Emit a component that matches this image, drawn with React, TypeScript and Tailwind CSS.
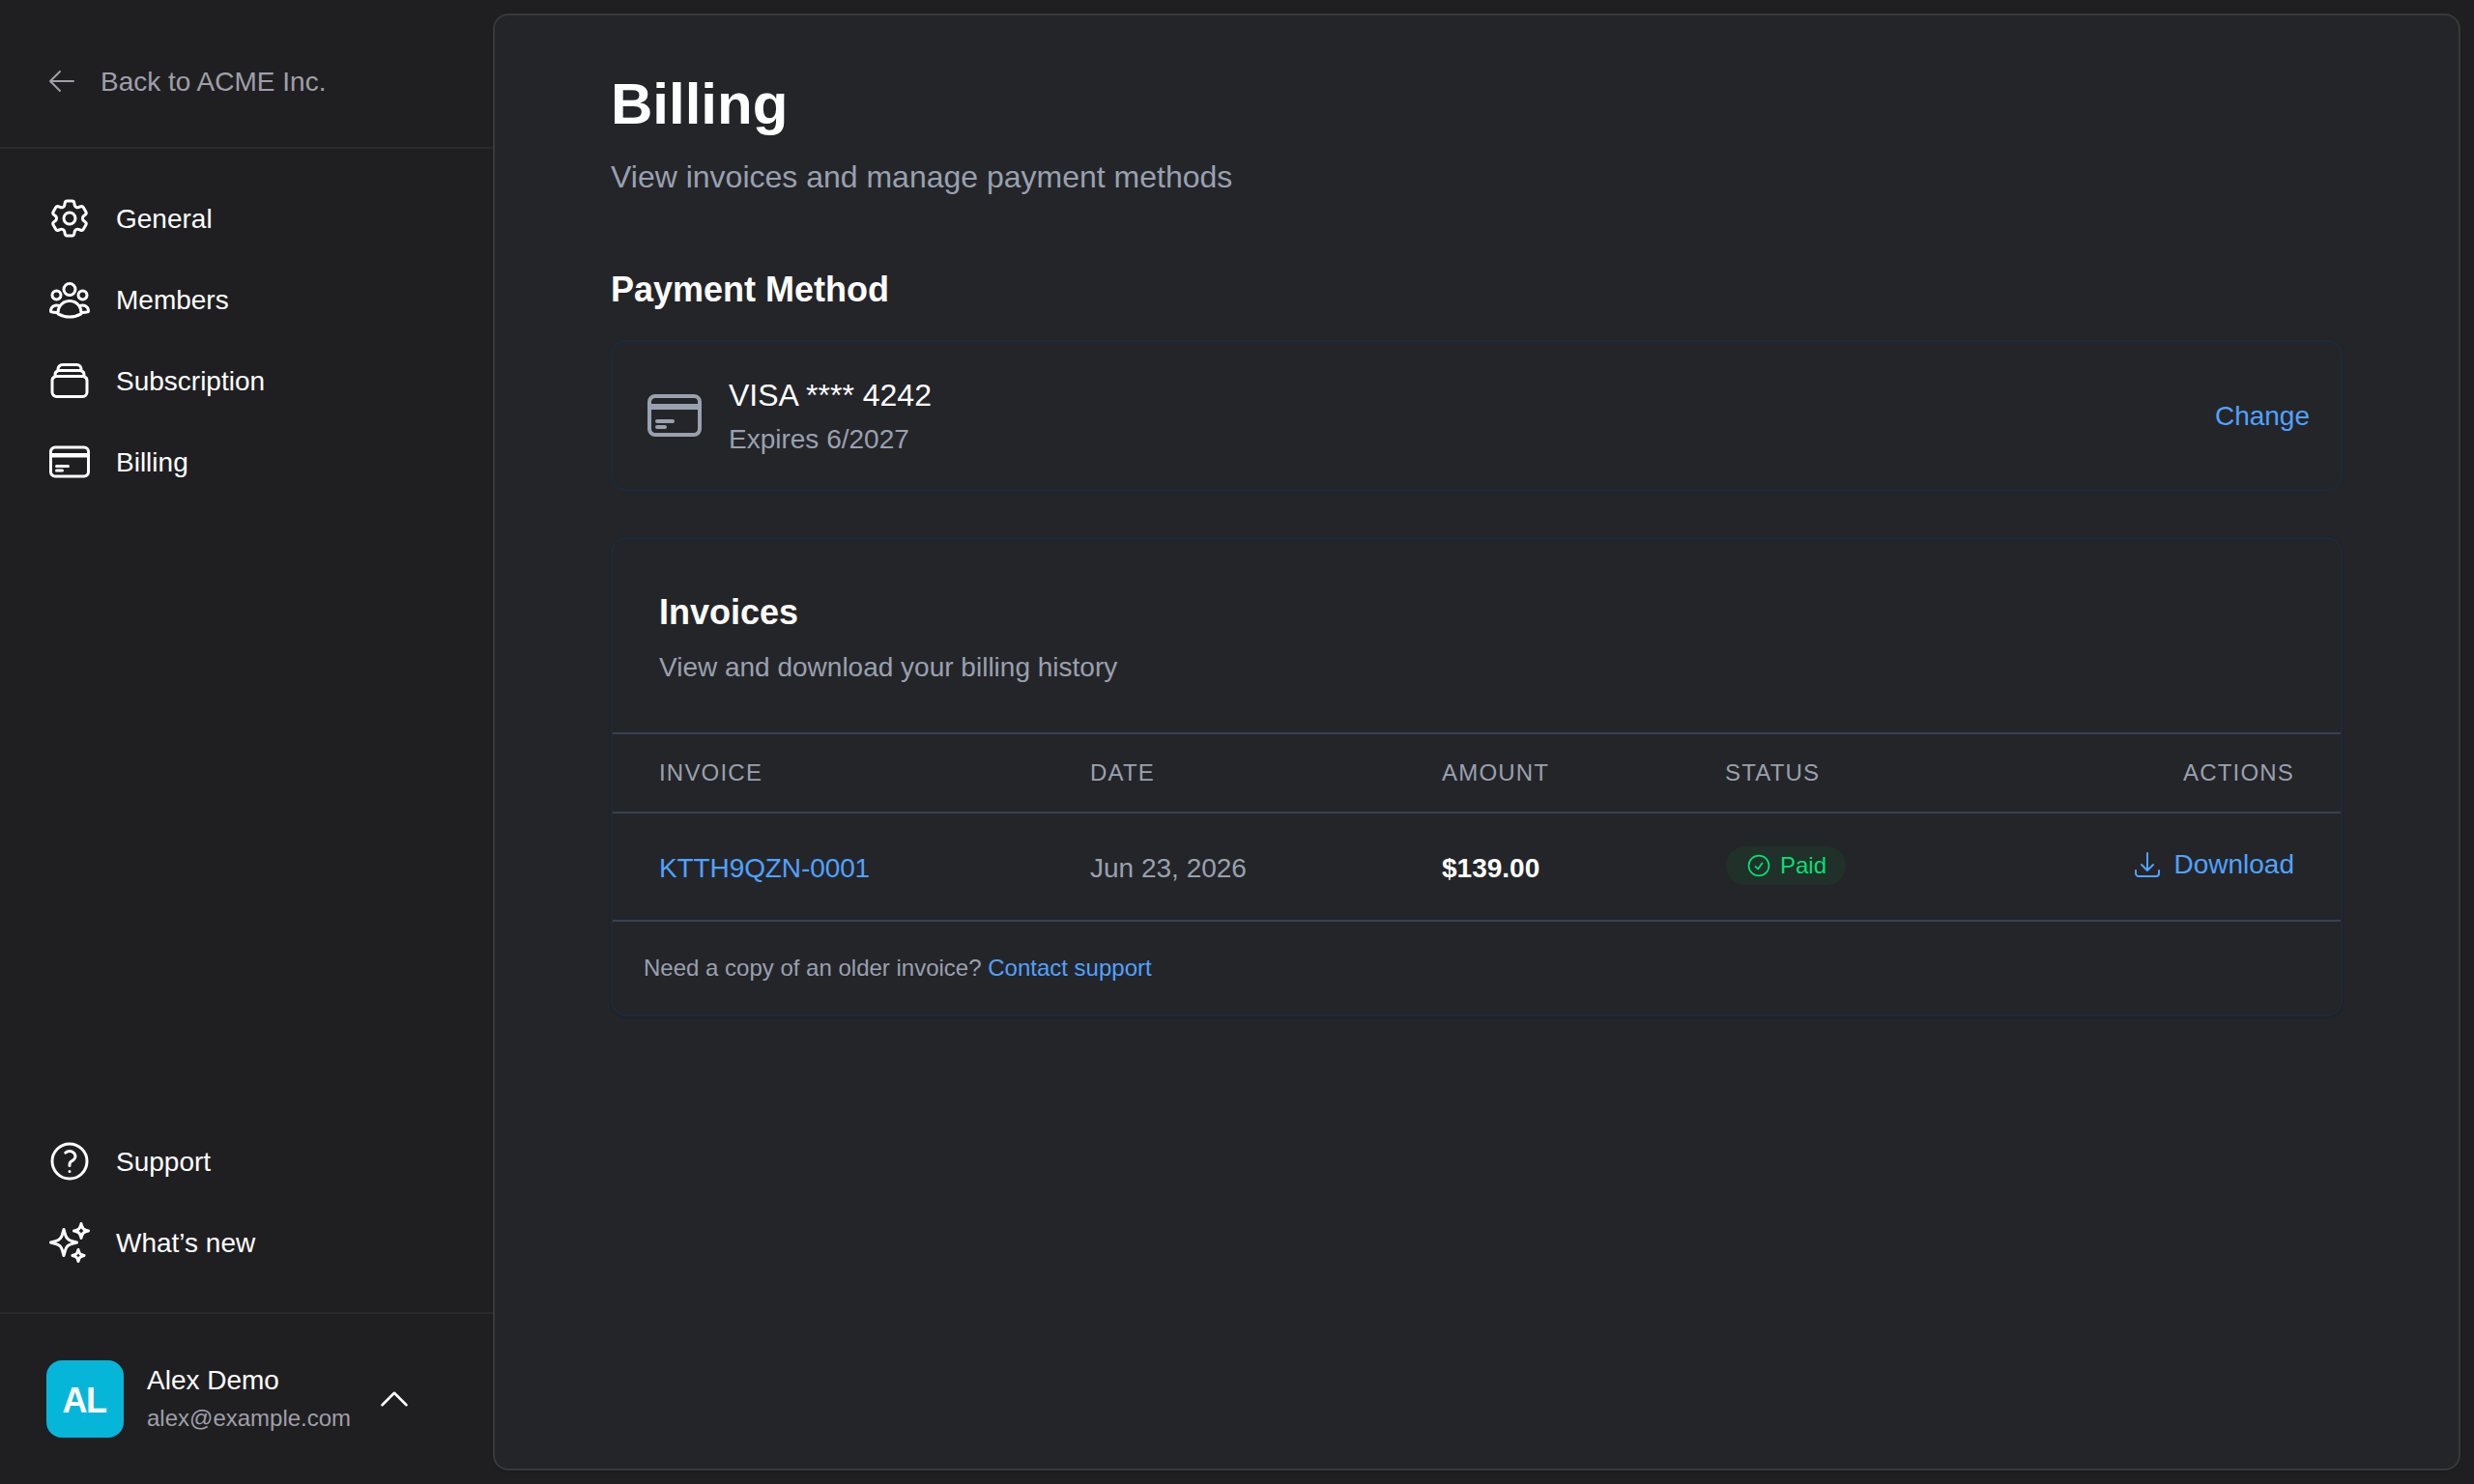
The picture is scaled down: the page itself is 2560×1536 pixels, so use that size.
import clsx from "clsx";
import type { ComponentType } from "react";
import {
  HiOutlineArrowDownTray,
  HiOutlineArrowLeft,
  HiOutlineCheckCircle,
  HiOutlineChevronUp,
  HiOutlineCog6Tooth,
  HiOutlineCreditCard,
  HiOutlineQuestionMarkCircle,
  HiOutlineRectangleStack,
  HiOutlineSparkles,
  HiOutlineUserGroup,
} from "react-icons/hi2";

type NavEntry = {
  label: string;
  icon: ComponentType<{ className?: string }>;
};

const mainNav: NavEntry[] = [
  { label: "General", icon: HiOutlineCog6Tooth },
  { label: "Members", icon: HiOutlineUserGroup },
  { label: "Subscription", icon: HiOutlineRectangleStack },
  { label: "Billing", icon: HiOutlineCreditCard },
];

const footerNav: NavEntry[] = [
  { label: "Support", icon: HiOutlineQuestionMarkCircle },
  { label: "What’s new", icon: HiOutlineSparkles },
];

const invoices = [
  { id: "KTTH9QZN-0001", date: "Jun 23, 2026", amount: "$139.00", status: "Paid" },
];

const NavList = ({ items }: { items: NavEntry[] }) => (
  <nav className="flex flex-col gap-1">
    {items.map(({ label, icon: Icon }) => (
      <a key={label} className="flex h-20 items-center gap-6 px-4 text-[28px] leading-10 text-white">
        <Icon className="size-12" />
        <span className="pt-0.5">{label}</span>
      </a>
    ))}
  </nav>
);

const Sidebar = () => (
  <aside className="flex w-[510px] shrink-0 flex-col">
    <div className="flex h-[154px] items-center border-b-2 border-[#2a2a2c] px-12">
      <a className="mt-4 flex items-center gap-6 text-[28px] leading-10 text-[#9f9fa9]">
        <HiOutlineArrowLeft className="size-8" />
        <span className="pt-0.5">Back to ACME Inc.</span>
      </a>
    </div>
    <div className="flex flex-1 flex-col justify-between px-8 py-8">
      <NavList items={mainNav} />
      <NavList items={footerNav} />
    </div>
    <div className="flex h-[178px] items-center border-t-2 border-[#2a2a2c] px-12">
      <div className="flex size-20 items-center justify-center rounded-2xl bg-[#06b6d9] pt-1 pr-0.5 text-[36px] font-bold tracking-[-1.5px] text-white">
        AL
      </div>
      <div className="ml-6 w-[216px]">
        <div className="-mb-0.5 text-[28px] leading-[42px] text-white">Alex Demo</div>
        <div className="text-2xl leading-10 text-[#9f9fa9]">alex@example.com</div>
      </div>
      <HiOutlineChevronUp className="ml-5 size-10 text-white" />
    </div>
  </aside>
);

const PaymentMethod = () => (
  <section className="mt-[65px]">
    <h2 className="text-4xl leading-[56px] font-bold text-white">Payment Method</h2>
    <div className="mt-6 flex h-[156px] items-center justify-between rounded-2xl border-2 border-[#1c2a3c] px-8">
      <div className="flex items-center gap-6">
        <HiOutlineCreditCard className="size-16 text-[#99a1af]" />
        <div>
          <div className="text-[32px] leading-12 text-white">VISA **** 4242</div>
          <div className="mt-0.5 text-[28px] leading-10 text-[#99a1af]">Expires 6/2027</div>
        </div>
      </div>
      <a className="pt-0.5 text-[28px] leading-10 text-[#51a2ff]">Change</a>
    </div>
  </section>
);

const headings = ["Invoice", "Date", "Amount", "Status", "Actions"];

const InvoiceTable = () => (
  <section className="mt-12 flex h-[496px] flex-col rounded-2xl border-2 border-[#1c2a3c] shadow-sm">
    <div className="h-[200px] px-12 pt-12">
      <h2 className="text-4xl leading-[56px] font-bold text-white">Invoices</h2>
      <p className="mt-[9px] text-[28px] leading-10 text-[#99a1af]">View and download your billing history</p>
    </div>
    <table className="w-full table-fixed border-y-2 border-[#364153] text-left">
      <colgroup>
        <col className="w-[446px]" />
        <col className="w-[364px]" />
        <col className="w-[293px]" />
        <col className="w-[343px]" />
        <col />
      </colgroup>
      <thead>
        <tr className="h-[82px] border-b-2 border-[#364153] text-2xl tracking-[1.2px] text-[#99a1af] uppercase">
          {headings.map((heading) => (
            <th key={heading} className={clsx("px-12 font-normal", heading === "Actions" && "text-right")}>
              {heading}
            </th>
          ))}
        </tr>
      </thead>
      <tbody>
        {invoices.map((invoice) => (
          <tr key={invoice.id} className="h-[112px] text-[28px] leading-10">
            <td className="px-12 pt-[3px] tracking-[-0.1px] text-[#51a2ff]">{invoice.id}</td>
            <td className="px-12 pt-[3px] text-[#99a1af]">{invoice.date}</td>
            <td className="px-12 pt-[3px] font-bold text-white">{invoice.amount}</td>
            <td className="px-12 pb-0.5">
              <span className="ml-px flex h-10 w-[124px] items-center gap-2 rounded-full bg-[#1f3129] px-5 text-2xl text-[#05df72]">
                <HiOutlineCheckCircle className="size-7" />
                {invoice.status}
              </span>
            </td>
            <td className="px-12 pb-1">
              <a className="flex items-center justify-end gap-[11px] text-[#51a2ff]">
                <HiOutlineArrowDownTray className="size-8" />
                Download
              </a>
            </td>
          </tr>
        ))}
      </tbody>
    </table>
    <p className="px-8 pt-8 text-2xl leading-8 text-[#99a1af]">
      Need a copy of an older invoice? <a className="text-[#51a2ff]">Contact support</a>
    </p>
  </section>
);

export default function App() {
  return (
    <div className="flex h-[1536px] w-[2560px] bg-[#1f1f21] font-['Liberation_Sans',sans-serif]">
      <Sidebar />
      <main className="mt-3.5 mr-3.5 mb-3.5 flex-1 rounded-2xl border-2 border-[#39393b] bg-[#242529] px-[120px] pt-[52px] shadow-sm">
        <h1 className="text-[60px] leading-[80px] font-bold text-white">Billing</h1>
        <p className="mt-[11px] text-[32px] leading-12 text-[#99a1af]">View invoices and manage payment methods</p>
        <PaymentMethod />
        <InvoiceTable />
      </main>
    </div>
  );
}
